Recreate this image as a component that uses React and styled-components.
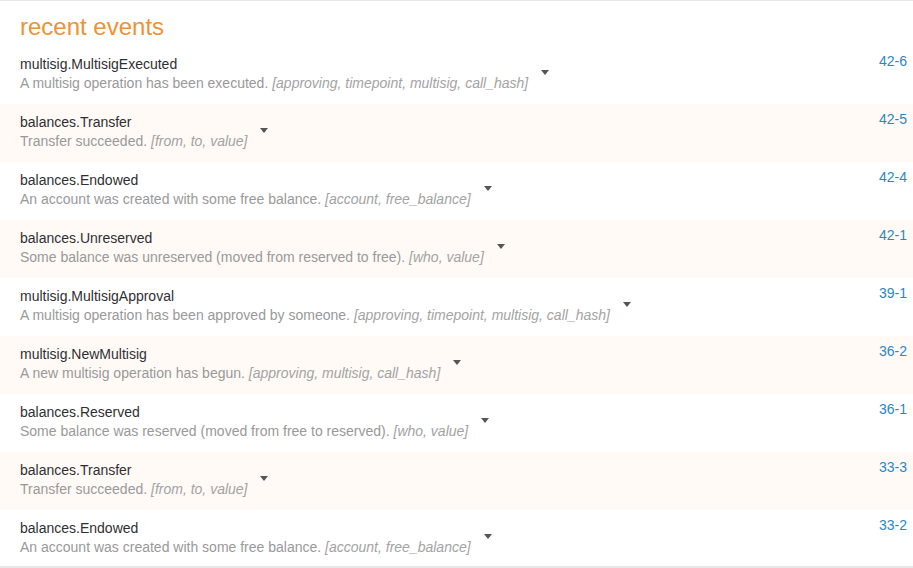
import React from 'react';
import styled, { createGlobalStyle } from 'styled-components';

const Global = createGlobalStyle`
  html, body {
    margin: 0;
    padding: 0;
    background: #fff;
    font-family: "Liberation Sans", Arial, sans-serif;
  }
`;

const Panel = styled.section`
  width: 913px;
  height: 568px;
  box-sizing: border-box;
  border-top: 1px solid #e8e8e8;
  border-bottom: 2px solid #e8e8e8;
  overflow: hidden;
`;

const Title = styled.h1`
  margin: 0;
  height: 45px;
  box-sizing: border-box;
  padding: 12px 0 0 20px;
  font-size: 24px;
  line-height: 28px;
  font-weight: normal;
  color: #f19135;
`;

const List = styled.div`
  display: flex;
  flex-direction: column;
`;

const Row = styled.div`
  display: flex;
  align-items: flex-start;
  height: 58px;
  box-sizing: border-box;
  padding: 9px 6px 0 20px;
  background: ${p => (p.$odd ? '#fffaf6' : '#fff')};
`;

const Info = styled.div`
  display: flex;
  flex-direction: column;
  font-size: 14px;
  line-height: 19px;
`;

const Name = styled.div`
  color: #2f2f33;
`;

const Desc = styled.div`
  color: #999;
`;

const Args = styled.i`
  color: #a3a3a3;
`;

const Toggle = styled.span`
  align-self: center;
  margin: 0 0 0 13px;
  transform: translateY(-7px);
  width: 0;
  height: 0;
  border-left: 4.5px solid transparent;
  border-right: 4.5px solid transparent;
  border-top: 5px solid #555;
`;

const Block = styled.a`
  margin-left: auto;
  margin-top: -2px;
  color: #2b87c2;
  font-size: 14px;
  line-height: 16px;
  text-decoration: none;
`;

const events = [
  ['multisig.MultisigExecuted', 'A multisig operation has been executed.', 'approving, timepoint, multisig, call_hash', '42-6'],
  ['balances.Transfer', 'Transfer succeeded.', 'from, to, value', '42-5'],
  ['balances.Endowed', 'An account was created with some free balance.', 'account, free_balance', '42-4'],
  ['balances.Unreserved', 'Some balance was unreserved (moved from reserved to free).', 'who, value', '42-1'],
  ['multisig.MultisigApproval', 'A multisig operation has been approved by someone.', 'approving, timepoint, multisig, call_hash', '39-1'],
  ['multisig.NewMultisig', 'A new multisig operation has begun.', 'approving, multisig, call_hash', '36-2'],
  ['balances.Reserved', 'Some balance was reserved (moved from free to reserved).', 'who, value', '36-1'],
  ['balances.Transfer', 'Transfer succeeded.', 'from, to, value', '33-3'],
  ['balances.Endowed', 'An account was created with some free balance.', 'account, free_balance', '33-2'],
];

export default function App() {
  return (
    <>
      <Global />
      <Panel>
        <Title>recent events</Title>
        <List>
          {events.map(([name, desc, args, block], i) => (
            <Row key={i} $odd={i % 2 === 1}>
              <Info>
                <Name>{name}</Name>
                <Desc>
                  {desc} <Args>[{args}]</Args>
                </Desc>
              </Info>
              <Toggle />
              <Block href="#">{block}</Block>
            </Row>
          ))}
        </List>
      </Panel>
    </>
  );
}
